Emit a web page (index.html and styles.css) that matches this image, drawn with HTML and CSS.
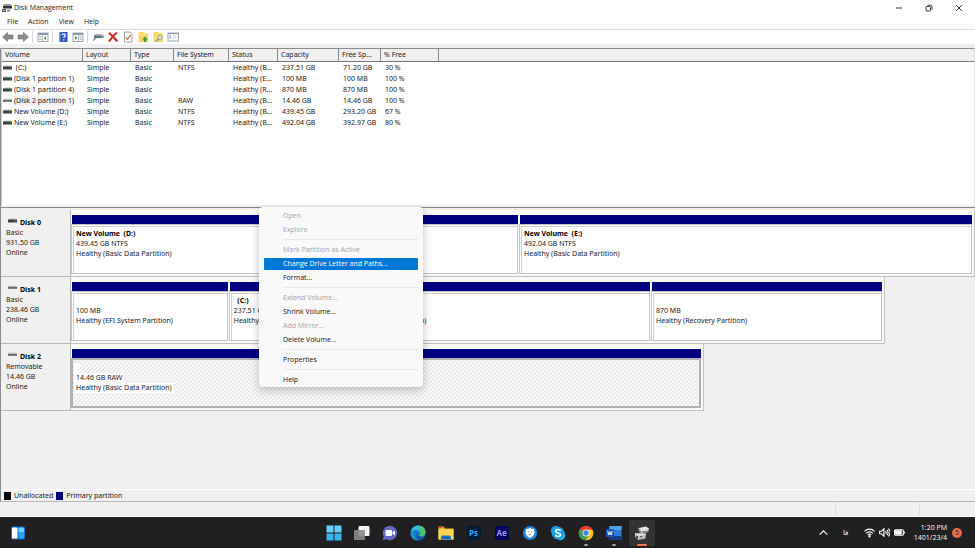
FILE: index.html
```
<!DOCTYPE html>
<html lang="en">
<head>
    <meta charset="UTF-8">
    <meta name="viewport" content="width=device-width, initial-scale=1.0">
    <title>Disk Management</title>
    <link rel="stylesheet" href="styles.css">
</head>
<body>

    <!-- Shared icons -->
    <svg class="sprite" aria-hidden="true">
        <symbol id="drive" viewBox="0 0 9 5">
            <path d="M1.5 0.5h6L9 2H0z" fill="#c4c4c4"/>
            <path d="M0 1.5h9v3H0z" fill="#3f3f3f"/>
            <path d="M6.8 2.400h1.200v1H6.800z" fill="#3fae55"/>
        </symbol>
        <symbol id="drive-plain" viewBox="0 0 9 5">
            <path d="M1.5 0.5h6L9 2H0z" fill="#cfcfcf"/>
            <path d="M0 1.8h9v2H0z" fill="#666"/>
        </symbol>
    </svg>

    <!-- Title bar -->
    <header class="titlebar">
        <svg class="app-icon" viewBox="0 0 10 10">
            <path d="M2 1h7l1 2H1z" fill="#999"/>
            <path d="M1 3h9v2.5H1z" fill="#333"/>
            <path d="M0 6h4v3H0z" fill="#555"/>
            <path d="M5 6.5h3v2H5z" fill="#888"/>
            <path d="M1 7h1.5v1H1z" fill="#eee"/>
        </svg>
        <h1>Disk Management</h1>
        <div class="window-buttons">
            <button aria-label="Minimize"><svg viewBox="0 0 8 8"><path d="M1 4h6"/></svg></button>
            <button aria-label="Restore"><svg viewBox="0 0 8 8"><rect x="1" y="2.5" width="4.5" height="4.5" rx="1"/><path d="M2.5 1.2h3a1.5 1.5 0 0 1 1.5 1.5v3"/></svg></button>
            <button aria-label="Close"><svg viewBox="0 0 8 8"><path d="M1 1l6 6M7 1l-6 6"/></svg></button>
        </div>
    </header>

    <!-- Menu -->
    <nav class="menubar">
        <button>File</button>
        <button>Action</button>
        <button>View</button>
        <button>Help</button>
    </nav>

    <!-- Toolbar -->
    <div class="toolbar">
        <button aria-label="Back"><svg viewBox="0 0 12 12"><path d="M0.5 6L5.5 1.5V4H11v4H5.500v2.500z" fill="#8c8c8c" stroke="#6e6e6e" stroke-width=".6"/></svg></button>
        <button aria-label="Forward"><svg viewBox="0 0 12 12"><path d="M11.500 6L6.500 1.500V4H1v4h5.500v2.500z" fill="#8c8c8c" stroke="#6e6e6e" stroke-width=".6"/></svg></button>
        <span class="divider"></span>
        <button aria-label="Show console tree"><svg viewBox="0 0 12 12"><rect x="1" y="2" width="10" height="8.500" fill="#fff" stroke="#8a929a" stroke-width=".8"/><path d="M1 2h10v2H1z" fill="#8a98a8"/><path d="M2 5.500h2.500M2 7h2.500M2 8.500h2.500M5.500 4v6.500" stroke="#9aa4ae" stroke-width=".7"/><path d="M9 5L6.500 7 9 9z" fill="#4f9a55"/></svg></button>
        <span class="divider"></span>
        <button aria-label="Help"><svg viewBox="0 0 12 12"><rect x="2" y="1" width="8.500" height="10" fill="#2e56c4"/><path d="M2 1h1.500v10H2z" fill="#7f9ae0"/><path d="M5.200 4.300c0-2 3.100-2 3.100 0 0 1.300-1.500 1.200-1.500 2.700M6.800 8.300v1.200" fill="none" stroke="#fff" stroke-width="1.200"/></svg></button>
        <button aria-label="Show action pane"><svg viewBox="0 0 12 12"><rect x="1" y="2" width="10" height="8.500" fill="#fff" stroke="#8a929a" stroke-width=".8"/><path d="M1 2h10v2H1z" fill="#8a98a8"/><path d="M7.500 5.500H10M7.500 7H10M7.500 8.500H10M6.500 4v6.500" stroke="#9aa4ae" stroke-width=".7"/><path d="M3 5l2.500 2L3 9z" fill="#3f9a45"/></svg></button>
        <span class="divider"></span>
        <button aria-label="Rescan disks"><svg viewBox="0 0 12 12"><path d="M3 3h7l1.500 1.500H2z" fill="#b5b5b5"/><path d="M2 4.500h9.500V7H2z" fill="#5f6d7d"/><path d="M4.500 6.500L1 9.500" stroke="#7b8b9c" stroke-width="1.500"/><circle cx="9.800" cy="5.700" r=".7" fill="#9fc4e8"/></svg></button>
        <button aria-label="Delete"><svg viewBox="0 0 12 12"><path d="M2 1.800C5 4 8 7.500 10.300 10.500M10 1.500C7 4 4 7.500 2 10.500" fill="none" stroke="#cf3123" stroke-width="2.200"/></svg></button>
        <button aria-label="Properties"><svg viewBox="0 0 12 12"><path d="M2.500 1h5.500l2 2v8H2.500z" fill="#fff" stroke="#8d8d8d" stroke-width=".8"/><path d="M4 6.500l1.500 1.800L8.800 4" fill="none" stroke="#dc5a35" stroke-width="1.200"/></svg></button>
        <button aria-label="New folder"><svg viewBox="0 0 12 12"><path d="M1.500 1h4.500l1 1.200h4v9H1.500z" fill="#f8d568"/><path d="M2 4h8.500" stroke="#fbe7a0" stroke-width=".8"/><path d="M8 5.500L11 8.500H9.200V11H6.800V8.500H5z" fill="#4a9b2f"/></svg></button>
        <button aria-label="Find"><svg viewBox="0 0 12 12"><path d="M1.500 1h4.500l1 1.200h4v9H1.500z" fill="#f8d568"/><circle cx="8" cy="6.500" r="2" fill="#e9f0f6" stroke="#7d93ab" stroke-width=".9"/><path d="M6.500 8L4 10.500" stroke="#7d93ab" stroke-width="1.200"/></svg></button>
        <button aria-label="Settings"><svg viewBox="0 0 12 12"><rect x="1" y="2" width="10.500" height="8" fill="#fff" stroke="#8a929a" stroke-width=".8"/><path d="M1 2h10.500v1.200H1z" fill="#8a98a8"/><path d="M2.500 5h1.500M2.500 7h1.500" stroke="#4f7fc0"/><path d="M5.500 5h4M5.500 7h4" stroke="#b5bcc4" stroke-width=".7"/></svg></button>
    </div>

    <main class="workspace">

        <!-- Volume list -->
        <div class="volumes">
            <table>
                <colgroup>
                    <col class="c-volume"><col class="c-layout"><col class="c-type"><col class="c-fs"><col class="c-status">
                    <col class="c-capacity"><col class="c-free"><col class="c-percent"><col>
                </colgroup>
                <thead>
                    <tr><th>Volume</th><th>Layout</th><th>Type</th><th>File System</th><th>Status</th><th>Capacity</th><th>Free Sp...</th><th>% Free</th><th></th></tr>
                </thead>
                <tbody>
                    <tr><td><svg class="drive"><use href="#drive"/></svg><span>&nbsp;(C:)</span></td><td>Simple</td><td>Basic</td><td>NTFS</td><td>Healthy (B...</td><td>237.51 GB</td><td>71.20 GB</td><td>30 %</td><td></td></tr>
                    <tr><td><svg class="drive"><use href="#drive"/></svg><span>(Disk 1 partition 1)</span></td><td>Simple</td><td>Basic</td><td></td><td>Healthy (E...</td><td>100 MB</td><td>100 MB</td><td>100 %</td><td></td></tr>
                    <tr><td><svg class="drive"><use href="#drive"/></svg><span>(Disk 1 partition 4)</span></td><td>Simple</td><td>Basic</td><td></td><td>Healthy (R...</td><td>870 MB</td><td>870 MB</td><td>100 %</td><td></td></tr>
                    <tr class="selected"><td><svg class="drive"><use href="#drive-plain"/></svg><span>(Disk 2 partition 1)</span></td><td>Simple</td><td>Basic</td><td>RAW</td><td>Healthy (B...</td><td>14.46 GB</td><td>14.46 GB</td><td>100 %</td><td></td></tr>
                    <tr><td><svg class="drive"><use href="#drive"/></svg><span>New Volume (D:)</span></td><td>Simple</td><td>Basic</td><td>NTFS</td><td>Healthy (B...</td><td>439.45 GB</td><td>293.20 GB</td><td>67 %</td><td></td></tr>
                    <tr><td><svg class="drive"><use href="#drive"/></svg><span>New Volume (E:)</span></td><td>Simple</td><td>Basic</td><td>NTFS</td><td>Healthy (B...</td><td>492.04 GB</td><td>392.97 GB</td><td>80 %</td><td></td></tr>
                </tbody>
            </table>
        </div>

        <!-- Disk map -->
        <div class="disks">
            <section class="disk">
                <div class="disk-info">
                    <h2><svg class="drive"><use href="#drive"/></svg>Disk 0</h2>
                    <p>Basic</p>
                    <p>931.50 GB</p>
                    <p>Online</p>
                </div>
                <div class="track full">
                    <div class="partition p-d">
                        <div class="box"><h3>New Volume&nbsp; (D:)</h3><p>439.45 GB NTFS</p><p>Healthy (Basic Data Partition)</p></div>
                    </div>
                    <div class="partition p-e">
                        <div class="box"><h3>New Volume&nbsp; (E:)</h3><p>492.04 GB NTFS</p><p>Healthy (Basic Data Partition)</p></div>
                    </div>
                </div>
            </section>

            <section class="disk">
                <div class="disk-info">
                    <h2><svg class="drive"><use href="#drive-plain"/></svg>Disk 1</h2>
                    <p>Basic</p>
                    <p>238.46 GB</p>
                    <p>Online</p>
                </div>
                <div class="track medium">
                    <div class="partition p-efi">
                        <div class="box"><h3>&nbsp;</h3><p>100 MB</p><p>Healthy (EFI System Partition)</p></div>
                    </div>
                    <div class="partition p-c">
                        <div class="box"><h3>&nbsp; (C:)</h3><p>237.51 GB NTFS</p><p>Healthy (Boot, Page File, Crash Dump, Basic Data Partition)</p></div>
                    </div>
                    <div class="partition p-recovery">
                        <div class="box"><h3>&nbsp;</h3><p>870 MB</p><p>Healthy (Recovery Partition)</p></div>
                    </div>
                </div>
            </section>

            <section class="disk">
                <div class="disk-info">
                    <h2><svg class="drive"><use href="#drive-plain"/></svg>Disk 2</h2>
                    <p>Removable</p>
                    <p>14.46 GB</p>
                    <p>Online</p>
                </div>
                <div class="track small">
                    <div class="partition active">
                        <div class="box"><h3>&nbsp;</h3><p>14.46 GB RAW</p><p>Healthy (Basic Data Partition)</p></div>
                    </div>
                </div>
            </section>
        </div>

        <!-- Legend -->
        <div class="legend">
            <span class="swatch unallocated"></span>Unallocated
            <span class="swatch primary"></span>Primary partition
        </div>
    </main>

    <div class="statusbar"><span></span><span></span><span></span></div>

    <!-- Context menu -->
    <div class="context-menu">
        <button disabled>Open</button>
        <button disabled>Explore</button>
        <hr>
        <button disabled>Mark Partition as Active</button>
        <button class="current">Change Drive Letter and Paths...</button>
        <button>Format...</button>
        <hr>
        <button disabled>Extend Volume...</button>
        <button>Shrink Volume...</button>
        <button disabled>Add Mirror...</button>
        <button>Delete Volume...</button>
        <hr>
        <button>Properties</button>
        <hr>
        <button>Help</button>
    </div>

    <!-- Taskbar -->
    <footer class="taskbar">
        <div class="widgets">
            <button aria-label="Widgets"><svg viewBox="0 0 16 16"><rect x="1" y="1.500" width="14" height="13" rx="1.500" fill="#0a6fd0"/><rect x="2" y="2.500" width="5.500" height="11" rx=".8" fill="#fff"/><rect x="8.500" y="2.500" width="5.500" height="5" rx=".8" fill="#6fd0fa"/><rect x="8.500" y="8" width="5.500" height="5.500" rx=".8" fill="#2ba4ee"/></svg></button>
        </div>

        <div class="apps">
            <button aria-label="Start"><svg viewBox="0 0 16 16"><path d="M.5.5h7v7h-7zM8.500.5h7v7h-7z" fill="#62d2fa"/><path d="M.5 8.500h7v7h-7zM8.500 8.500h7v7h-7z" fill="#38b4f0"/></svg></button>
            <button aria-label="Task view"><svg viewBox="0 0 16 16"><rect x="4.500" y="1" width="11" height="10" rx="1" fill="#f4f4f4"/><rect x="0" y="5" width="11" height="10" rx="1" fill="#8a8a8a" opacity=".9"/></svg></button>
            <button aria-label="Chat"><svg viewBox="0 0 16 16"><path d="M8 .8a7.200 7.200 0 1 1-3.600 13.500L.8 15.300l.8-4A7.200 7.200 0 0 1 8 .8z" fill="#6468c8"/><rect x="3.500" y="5" width="6.500" height="6" rx="1.200" fill="#fff"/><path d="M10.500 7.200l2.500-1.800v5.200l-2.500-1.800z" fill="#fff"/></svg></button>
            <button aria-label="Edge"><svg viewBox="0 0 16 16"><circle cx="8" cy="8" r="7.500" fill="#1479cc"/><path d="M.7 7C1.500 2.500 5 .4 8.500.5c4.500.2 7 3.500 7 6.500 0 2.500-1.800 4-4 4-1.600 0-2-.8-1.500-1.800C11 6.500 8 4.500 5 5 2.800 5.400 1.300 6.500.7 7z" fill="#35bce0"/><path d="M10 .8c3.600.8 5.500 3.500 5.500 6.200 0 2.500-1.800 4-4 4-1.600 0-2-.8-1.500-1.800C11.200 6.800 10 4.800 8.500 4.500z" fill="#4cc566"/><path d="M5 5c-3 3-2 8.500 3 10.400-4 .2-7.500-3-7.400-7.200C1.500 6 3 5 5 5z" fill="#1597d6"/><path d="M7 7.500c-1 4 3 6 7 4.300-.6 1-2 2.300-3.300 3C6.500 14 5.300 10 7 7.500z" fill="#0d4f93"/></svg></button>
            <button aria-label="File Explorer"><svg viewBox="0 0 16 16"><path d="M.5 1.500h5l1.500 2h8.500v11H.5z" fill="#f0b429"/><path d="M.5 4.500h15v10H.5z" fill="#fdd456"/><path d="M.8 1.500h3.700v1.500H.8z" fill="#d9482b"/><path d="M3 14.500v-3l1-1h8l1 1v3z" fill="#1d77c9"/><path d="M5 12.500h6" stroke="#0c4f94"/></svg></button>
            <button aria-label="Photoshop"><span class="adobe ps">Ps</span></button>
            <button aria-label="After Effects"><span class="adobe ae">Ae</span></button>
            <button aria-label="Security"><svg viewBox="0 0 16 16"><circle cx="8" cy="8" r="7" fill="#1d87e4"/><path d="M8 3l1.500.8 2.500.2.500 4c-.5 2.500-2.500 4-4.500 5-2-1-4-2.500-4.500-5L4 4l2.500-.2z" fill="#fff"/><path d="M6 7h1M9 7h1M7 9.500h2" stroke="#58728d" stroke-width=".8"/></svg></button>
            <button aria-label="Skype"><svg viewBox="0 0 16 16"><circle cx="5.500" cy="5.500" r="4.700" fill="#1c8fe0"/><circle cx="10.500" cy="10.500" r="4.700" fill="#2ab8f2"/><circle cx="8" cy="8" r="6.300" fill="#13a2ea"/><path d="M10.600 6C10 3.800 5.600 4 5.600 6.200c0 2.300 5 1.300 5 3.600 0 2.200-4.600 2.300-5.200 0" fill="none" stroke="#fff" stroke-width="1.500"/></svg></button>
            <button class="running" aria-label="Chrome"><svg viewBox="0 0 16 16"><circle cx="8" cy="8" r="7.300" fill="#e34133"/><path d="M8 8L1.700 4.300A7.300 7.300 0 0 0 7.500 15.300L11 9.500z" fill="#2da14c"/><path d="M8 8h0l3.200 1.800-3.700 5.500A7.300 7.300 0 0 0 14.500 4.700H8z" fill="#fbc31b"/><circle cx="8" cy="8" r="3.500" fill="#fff"/><circle cx="8" cy="8" r="2.700" fill="#3f7fe8"/></svg></button>
            <button class="running" aria-label="Word"><svg viewBox="0 0 16 16"><rect x="3.500" y="1" width="12" height="14" rx="1" fill="#2b7cd3"/><path d="M3.500 1h12v4h-12z" fill="#4ba4ec"/><path d="M3.500 11h12v4h-12z" fill="#143f82"/><rect x="0" y="4" width="8" height="8" rx=".8" fill="#1b56b0"/><path d="M1.700 6l1.100 4L4 6.600 5.200 10l1.100-4" fill="none" stroke="#fff" stroke-width=".9"/></svg></button>
            <button class="running open" aria-label="Disk Management"><svg viewBox="0 0 16 16"><path d="M4.500 3L12 1.500l3 2-.5 2L7 7z" fill="#e4e4e4"/><path d="M4.500 3L7 7l7.500-1.500v1.700L7 8.700 4.200 5z" fill="#8e8e8e"/><path d="M1 8.500l6-1 5 1.500-.5 4.500-7 1.500L1 12z" fill="#bdbdbd"/><path d="M1 8.500l3.500 1.800 7.500-1.300" fill="none" stroke="#f2f2f2"/><path d="M2 10.500l2 1v2l-2-1z" fill="#333"/><path d="M6 12l2-.4" stroke="#333"/></svg></button>
        </div>

        <div class="tray">
            <button class="chevron" aria-label="Show hidden icons"><svg viewBox="0 0 10 10"><path d="M1.500 7L5 3.500 8.500 7"/></svg></button>
            <button class="language" lang="fa">فا</button>
            <button class="system" aria-label="Network, volume and battery">
                <svg viewBox="0 0 10 10"><path d="M.5 4C3 1.300 7 1.300 9.500 4M2 5.800c1.700-1.800 4.300-1.800 6 0M3.500 7.300c.9-.9 2.100-.9 3 0"/><circle cx="5" cy="8.500" r=".6"/></svg>
                <svg viewBox="0 0 10 10"><path d="M.5 3.800h1.700L4.500 1.700v6.600L2.200 6.200H.5zM6 3.700c.7.8.7 1.800 0 2.600M7.300 2.600c1.300 1.300 1.300 3.500 0 4.800M8.500 1.500c2 2 2 5 0 7"/></svg>
                <svg viewBox="0 0 10 10"><rect x=".5" y="2.500" width="8" height="5" rx="1"/><path d="M1.500 3.500h5v3h-5z" fill="#fff"/><path d="M9.500 4v2"/></svg>
            </button>
            <button class="clock">1:20 PM<br>1401/23/4</button>
            <span class="badge">5</span>
        </div>
    </footer>
</body>
</html>
```

FILE: styles.css
```
* {
    box-sizing: border-box;
}

body {
    margin: 0;
    min-height: 100vh;
    display: flex;
    flex-direction: column;
    position: relative;
    background-color: #f0f0f0;
    color: #222;
    font-family: "Open Sans", "Noto Sans", sans-serif;
    font-size: 7px;
    line-height: 10px;
}

h1, h2, h3, p {
    margin: 0;
    font-size: 7px;
    font-weight: normal;
}

button {
    margin: 0;
    padding: 0;
    border: none;
    background: none;
    color: inherit;
    font: inherit;
}

svg {
    display: block;
    flex: none;
}

.sprite {
    position: absolute;
    width: 0;
    height: 0;
}

/* Title bar */
.titlebar {
    display: flex;
    align-items: center;
    height: 15px;
    padding-left: 2px;
    background-color: #fff;
}

.app-icon {
    width: 10px;
    height: 10px;
    margin-right: 2px;
}

.window-buttons {
    display: flex;
    margin-left: auto;
    padding-right: 1px;
}

.window-buttons button {
    width: 30px;
    display: flex;
    justify-content: center;
}

.window-buttons svg {
    width: 8px;
    height: 8px;
    fill: none;
    stroke: #333;
}

/* Menu */
.menubar {
    display: flex;
    gap: 10px;
    height: 15px;
    padding: 0 7px;
    align-items: center;
    background-color: #fff;
    border-bottom: 1px solid #dcdcdc;
}

/* Toolbar */
.toolbar {
    display: flex;
    align-items: center;
    height: 14px;
    background-color: #fff;
}

.toolbar button {
    width: 15px;
    display: flex;
    justify-content: center;
}

.toolbar svg {
    width: 12px;
    height: 12px;
}

.divider {
    width: 1px;
    height: 12px;
    margin: 0 2px;
    background-color: #d5d5d5;
}

/* Workspace */
.workspace {
    flex: 1;
    display: flex;
    flex-direction: column;
    margin-top: 4px;
    border-left: 1px solid #8a8a8f;
    border-bottom: 1px solid #b8b8b8;
    font-family: "Noto Sans", "Open Sans", sans-serif;
}

.volumes {
    height: 157px;
    background-color: #fff;
    border-top: 1px solid #8a8a8a;
    border-left: 1px solid #ccc;
    border-right: 1px solid #ddd;
}

table {
    width: 100%;
    table-layout: fixed;
    border-collapse: separate;
    border-spacing: 0;
}

.c-volume { width: 81px; }
.c-layout { width: 48px; }
.c-type { width: 43px; }
.c-fs { width: 55px; }
.c-status { width: 49px; }
.c-capacity { width: 61px; }
.c-free { width: 42px; }
.c-percent { width: 58px; }

th, td {
    height: 11px;
    padding: 0 0 0 4px;
    line-height: 10px;
    text-align: left;
    font-weight: normal;
    white-space: nowrap;
    overflow: hidden;
}

th {
    height: 13px;
    padding-left: 3px;
    line-height: 12px;
    background-color: #f0f0f0;
    border-right: 1px solid #8a8a8a;
    border-bottom: 1px solid #777;
}

th:last-child {
    border-right: none;
}

td:first-child {
    display: flex;
    align-items: center;
    gap: 2px;
    padding-left: 1px;
}

.selected span {
    background-color: #f0f0f0;
}

.drive {
    width: 9px;
    height: 5px;
}

/* Disk map */
.disks {
    flex: 1;
    margin-top: 2px;
    padding-top: 2px;
    border-top: 1px solid #8a8a8a;
}

.disk {
    display: grid;
    grid-template-columns: 70px 1fr;
    height: 67px;
}

.disk-info {
    padding: 8px 5px;
    border-right: 1px solid #b8b8b8;
    border-bottom: 1px solid #b8b8b8;
}

.disk-info h2 {
    display: flex;
    gap: 3px;
    padding-left: 2px;
    color: #000;
    font-weight: bold;
}

.track {
    display: flex;
    gap: 1px;
    padding: 5px 2px 2px 0;
    background-color: #f8f8f8;
    border-right: 1px solid #c4c4c4;
    border-bottom: 1px solid #c0c0c0;
}

.full { width: 100%; }
.medium { width: 90%; }
.small { width: 70%; }

.partition {
    display: flex;
    flex-direction: column;
    flex: 1 1 0;
    min-width: 0;
}

.partition::before {
    content: "";
    height: 9px;
    margin-left: 1px;
    background-color: #000080;
}

.p-d { flex-grow: 447; }
.p-e { flex-grow: 453; }
.p-efi { flex-grow: 157; }
.p-c { flex-grow: 422; }
.p-recovery { flex-grow: 231; }

.box {
    flex: 1;
    padding: 4px 2px;
    background-color: #fff;
    border: 1px solid #c4c4c4;
    box-shadow: inset 1px 1px #fff, inset 2px 2px #d0d0d0;
    white-space: nowrap;
    overflow: hidden;
}

.box h3,
.box p {
    padding-left: 2px;
}

.box h3 {
    color: #000;
    font-weight: bold;
}

.active .box {
    padding: 3px 1px;
    border: 2px solid #b0b0b0;
    box-shadow: none;
    background: linear-gradient(135deg, #fcfcfc 25%, #e8e8e8 25%, #e8e8e8 50%, #fcfcfc 50%, #fcfcfc 75%, #e8e8e8 75%) 0 0 / 4px 4px;
}

.active h3,
.active p {
    width: fit-content;
    padding-right: 2px;
    background-color: #fff;
}

/* Legend */
.legend {
    display: flex;
    align-items: center;
    gap: 3px;
    height: 12px;
    padding-left: 3px;
    border-top: 1px solid #fff;
}

.swatch {
    width: 7px;
    height: 8px;
}

.unallocated {
    background-color: #0c0c10;
}

.primary {
    background-color: #000080;
}

.statusbar {
    display: flex;
    justify-content: flex-end;
    height: 15px;
    border-bottom: 1px solid #fff;
}

.statusbar span {
    width: 84px;
    border-left: 1px solid #e0e0e0;
}

.statusbar span:last-child {
    width: 56px;
}

.statusbar span:first-child {
    border-left: none;
}

/* Context menu */
.context-menu {
    position: absolute;
    left: 259px;
    top: 207px;
    width: 164px;
    padding: 2px 5px 0;
    display: flex;
    flex-direction: column;
    background-color: #f9f9f9;
    border-radius: 4px;
    box-shadow: 0 3px 8px rgba(0, 0, 0, 0.25);
    color: #111;
}

.context-menu button {
    height: 14px;
    padding-left: 19px;
    text-align: left;
}

.context-menu button:disabled {
    color: #a3a3a3;
}

.context-menu .current {
    height: 12px;
    margin: 1px 0;
    background-color: #0078d7;
    color: #fff;
    border-radius: 1px;
}

.context-menu hr {
    height: 1px;
    margin: 2px 0 3px 19px;
    border: none;
    background-color: #e8e8e8;
}

/* Taskbar */
.taskbar {
    display: grid;
    grid-template-columns: 1fr auto 1fr;
    align-items: center;
    height: 31px;
    background-color: #202023;
    color: #fff;
}

.taskbar svg {
    width: 16px;
    height: 16px;
}

.widgets {
    display: flex;
    padding-left: 10px;
}

.apps {
    display: flex;
    gap: 2px;
}

.apps button {
    width: 26px;
    height: 26px;
    display: flex;
    align-items: center;
    justify-content: center;
    position: relative;
    border-radius: 2px;
}

.apps .open {
    background-color: #333336;
}

.running::after {
    content: "";
    position: absolute;
    bottom: 0;
    width: 4px;
    height: 2px;
    border-radius: 1px;
    background-color: #9a9a9a;
}

.open::after {
    width: 10px;
    background-color: #f0764f;
}

.adobe {
    width: 14px;
    height: 14px;
    border-radius: 2px;
    font-size: 8px;
    font-weight: bold;
    line-height: 14px;
}

.ps {
    background-color: #001d38;
    color: #36a5f5;
}

.ae {
    background-color: #04045c;
    color: #a09af5;
}

.tray {
    display: flex;
    align-items: center;
    justify-content: flex-end;
    padding-right: 13px;
}

.taskbar .tray svg {
    width: 11px;
    height: 11px;
    fill: none;
    stroke: #fff;
}

.language {
    margin: 0 16px 0 14px;
}

.system {
    display: flex;
    gap: 4px;
}

.clock {
    margin: 0 5px 0 9px;
    text-align: right;
}

.badge {
    width: 10px;
    height: 10px;
    border-radius: 50%;
    background-color: #f0694a;
    color: #222;
    text-align: center;
}
```
